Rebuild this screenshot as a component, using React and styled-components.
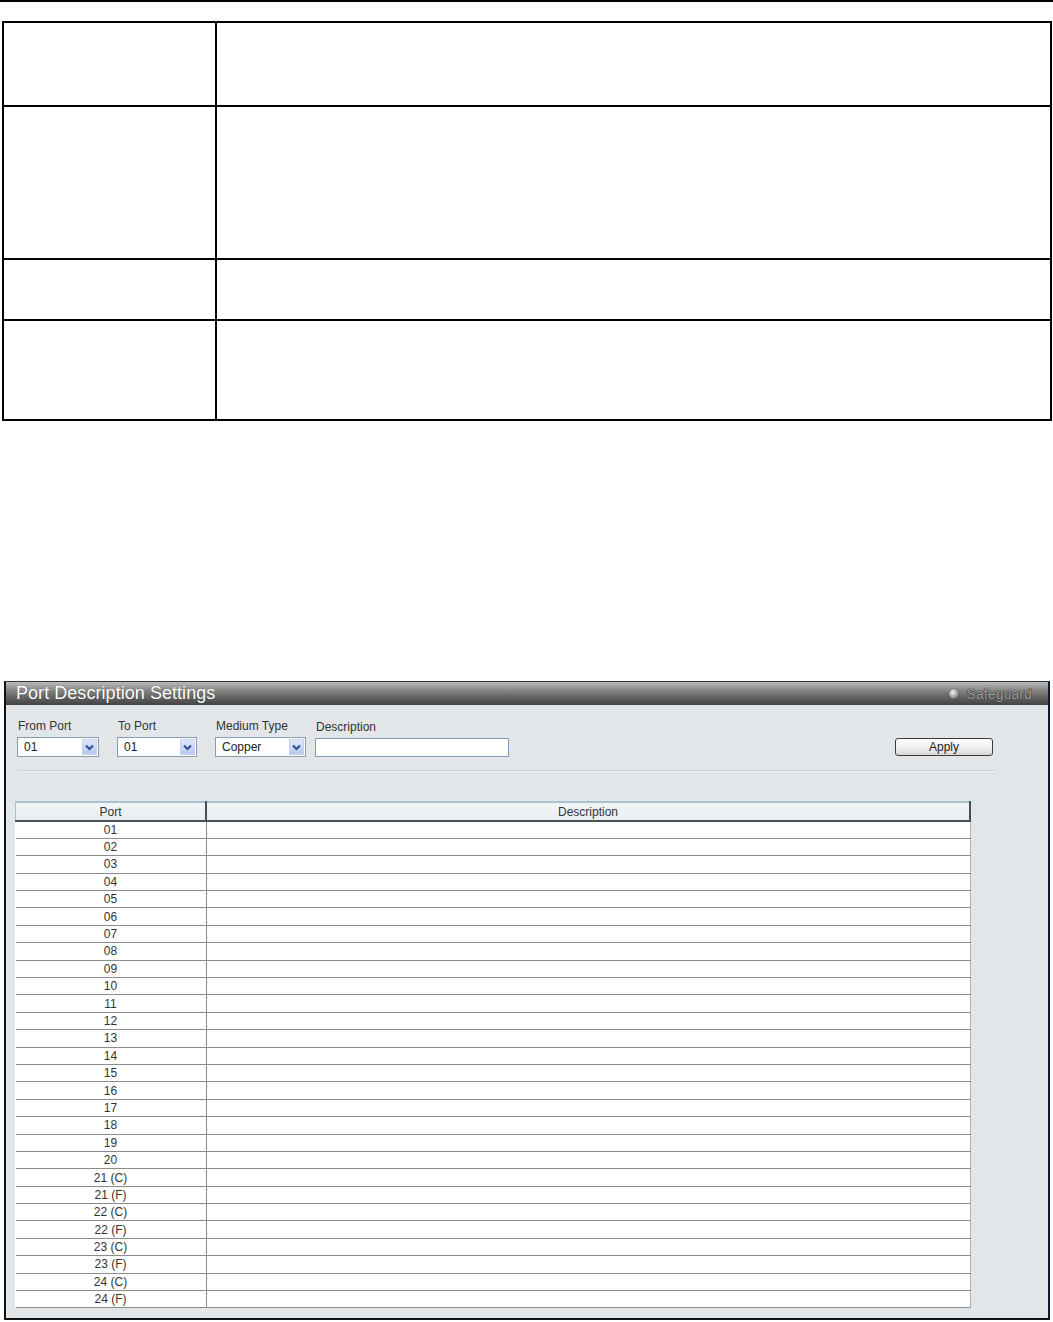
import styled, { createGlobalStyle } from "styled-components";

const GlobalStyle = createGlobalStyle`
  body {
    margin: 0;
    background: #fff;
    font-family: "Liberation Sans", Arial, sans-serif;
  }
`;

const ports = [
  "01", "02", "03", "04", "05", "06", "07", "08", "09", "10",
  "11", "12", "13", "14", "15", "16", "17", "18", "19", "20",
  "21 (C)", "21 (F)", "22 (C)", "22 (F)", "23 (C)", "23 (F)", "24 (C)", "24 (F)",
];

const docRows = [84, 153, 61, 100];

export default function App() {
  return (
    <Page>
      <GlobalStyle />
      <TopRule />
      <DocTable>
        <tbody>
          {docRows.map((h, i) => (
            <DocRow key={i} $h={h}>
              <DocKey />
              <DocCell />
            </DocRow>
          ))}
        </tbody>
      </DocTable>

      <Panel>
        <TitleBar>
          <Title>Port Description Settings</Title>
          <Safeguard>
            <Led />
            Safeguard
          </Safeguard>
        </TitleBar>
        <Body>
          <FormRow>
            <Field>
              <Label>From Port</Label>
              <Select $w={82}>
                <span>01</span>
                <Arrow><Chevron /></Arrow>
              </Select>
            </Field>
            <Field>
              <Label>To Port</Label>
              <Select $w={80}>
                <span>01</span>
                <Arrow><Chevron /></Arrow>
              </Select>
            </Field>
            <Field>
              <Label>Medium Type</Label>
              <Select $w={91}>
                <span>Copper</span>
                <Arrow><Chevron /></Arrow>
              </Select>
            </Field>
            <Field $tight>
              <Label>Description</Label>
              <TextBox />
            </Field>
            <ApplyButton>Apply</ApplyButton>
          </FormRow>
          <Separator />
          <PortTable>
            <thead>
              <tr>
                <HeadCell $first>Port</HeadCell>
                <HeadCell>Description</HeadCell>
              </tr>
            </thead>
            <tbody>
              {ports.map((p) => (
                <PortRow key={p}>
                  <PortCell>{p}</PortCell>
                  <DescCell />
                </PortRow>
              ))}
            </tbody>
          </PortTable>
        </Body>
      </Panel>
    </Page>
  );
}

const Chevron = () => (
  <svg width="9" height="7" viewBox="0 0 9 7">
    <path d="M1 1.5 L4.5 5 L8 1.5" fill="none" stroke="#2d4f8f" strokeWidth="2" />
  </svg>
);

const Page = styled.div`
  width: 1053px;
`;

const TopRule = styled.div`
  height: 2px;
  background: #000;
`;

const DocTable = styled.table`
  margin: 19px 0 0 2px;
  width: 1050px;
  border-collapse: collapse;
  border: 2px solid #000;
`;

const DocRow = styled.tr`
  height: ${(p) => p.$h}px;
`;

const DocKey = styled.td`
  width: 211px;
  border: 2px solid #000;
  padding: 0;
`;

const DocCell = styled.td`
  border: 2px solid #000;
  padding: 0;
`;

const Panel = styled.div`
  margin: 260px 0 0 4px;
  width: 1042px;
  border-top: 1px solid #2a3440;
  border-left: 2px solid #111;
  border-right: 2px solid #0e1c2c;
  border-bottom: 2px solid #111;
  background: #e2e6e9;
`;

const TitleBar = styled.div`
  height: 23px;
  display: flex;
  align-items: center;
  justify-content: space-between;
  padding: 0 10px 0 10px;
  background: linear-gradient(#bababa 0%, #7a7a7a 45%, #424242 100%);
`;

const Title = styled.div`
  color: #fff;
  font-size: 18px;
  letter-spacing: 0.05px;
  text-shadow: 0 0 1px rgba(0, 0, 0, 0.4);
`;

const Safeguard = styled.div`
  display: flex;
  align-items: center;
  gap: 7px;
  color: #a0a0a0;
  font-size: 14px;
  letter-spacing: 0.1px;
  text-shadow: 0 0 1px #1e1e1e, 0 0 1px #1e1e1e;
  padding-right: 6px;
`;

const Led = styled.span`
  width: 10px;
  height: 10px;
  border-radius: 50%;
  background: radial-gradient(circle at 40% 35%, #f2f2f2, #9a9a9a 55%, #3a3a3a);
  box-shadow: 0 0 1px #111;
`;

const Body = styled.div`
  padding: 14px 0 10px 11px;
`;

const FormRow = styled.div`
  display: flex;
  align-items: flex-end;
  gap: 18px;
  padding-right: 55px;
`;

const Field = styled.div`
  display: flex;
  flex-direction: column;
  gap: 4px;
  margin-left: ${(p) => (p.$tight ? "-9px" : "0")};
`;

const Label = styled.div`
  font-size: 12px;
  color: #333;
  padding-left: 1px;
  line-height: 14px;
`;

const Select = styled.div`
  width: ${(p) => p.$w}px;
  height: 20px;
  box-sizing: border-box;
  display: flex;
  align-items: center;
  justify-content: space-between;
  padding: 0 1px 0 6px;
  border: 1px solid #8a9bab;
  background: #fff;
  font-size: 12px;
  color: #222;
`;

const Arrow = styled.span`
  width: 15px;
  height: 16px;
  display: flex;
  align-items: center;
  justify-content: center;
  background: linear-gradient(#dfe7fb, #b7c8f0);
  border: 1px solid #c5d2ef;
  box-sizing: border-box;
`;

const TextBox = styled.div`
  width: 194px;
  height: 19px;
  box-sizing: border-box;
  border: 1px solid #7f9db9;
  background: #fff;
`;

const ApplyButton = styled.button`
  margin-left: auto;
  width: 98px;
  height: 18px;
  padding: 0;
  border: 1px solid #3c3c3c;
  border-radius: 3px;
  background: linear-gradient(#ffffff, #ececec 60%, #d8d8d8);
  font-family: "Liberation Sans", Arial, sans-serif;
  font-size: 12px;
  color: #222;
  margin-bottom: 1px;
`;

const Separator = styled.div`
  margin: 13px 0 0 0;
  width: 978px;
  height: 1px;
  background: #cbcfd3;
  border-bottom: 1px solid #f2f4f5;
`;

const PortTable = styled.table`
  margin: 29px 0 0 -2px;
  width: 956px;
  border-collapse: collapse;
  background: #fff;
  font-size: 12px;
  color: #333;
`;

const HeadCell = styled.th`
  height: 17px;
  padding: 0;
  font-weight: normal;
  line-height: 14px;
  background: linear-gradient(#f2f5f7, #e8edf0);
  border-top: 2px solid #a8c2d0;
  border-bottom: 2px solid #4a4f55;
  border-left: ${(p) => (p.$first ? "1px solid #a8c2d0" : "2px solid #4a4f55")};
  border-right: 2px solid #4a4f55;
  width: ${(p) => (p.$first ? "189px" : "auto")};
`;

const PortRow = styled.tr`
  height: 17.4px;
`;

const PortCell = styled.td`
  padding: 0;
  text-align: center;
  line-height: 14px;
  border-bottom: 1px solid #8c8c8c;
  border-right: 1px solid #8c8c8c;
`;

const DescCell = styled.td`
  padding: 0;
  border-bottom: 1px solid #8c8c8c;
  border-right: 1px solid #b0b0b0;
`;
